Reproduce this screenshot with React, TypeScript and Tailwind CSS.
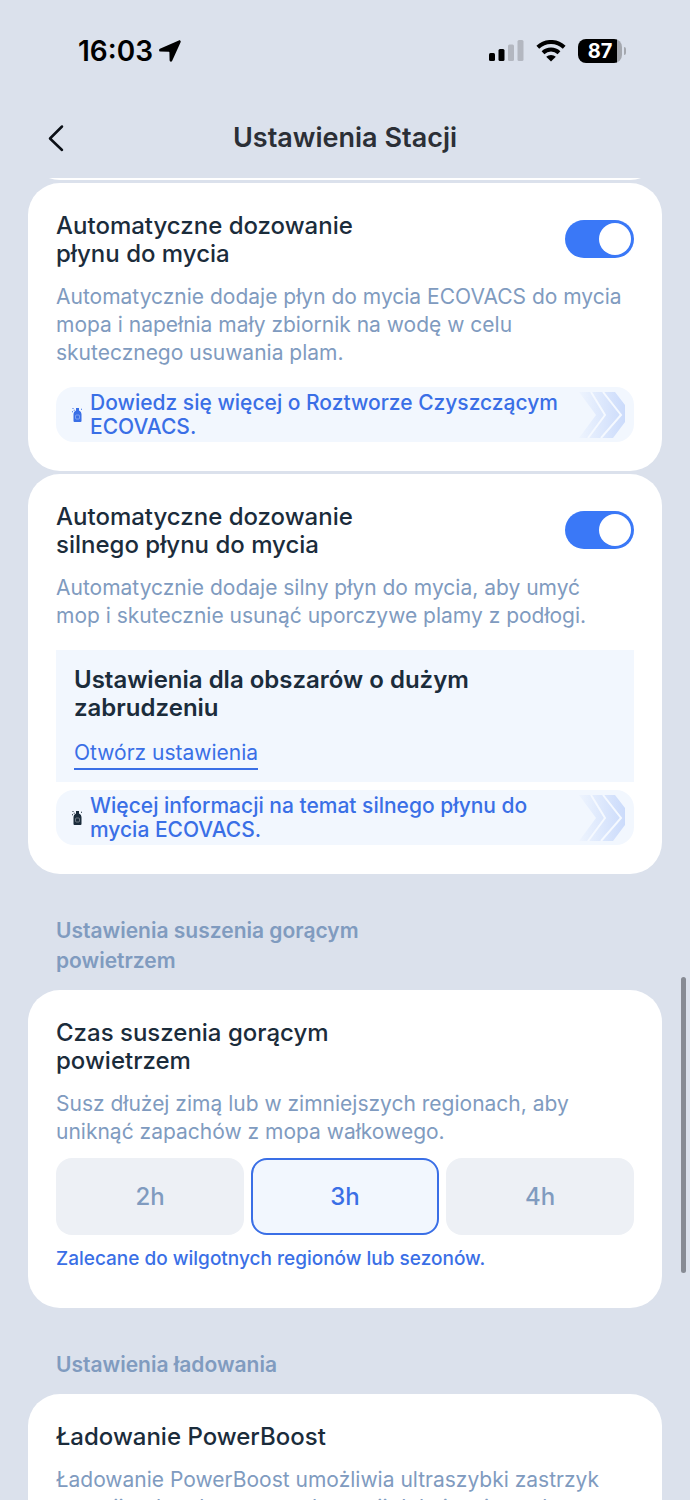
import { useState } from 'react';
import type { ReactNode } from 'react';

const dryingTimes = ['2h', '3h', '4h'];

function StatusBar() {
    return (
        <div className="flex h-[102px] shrink-0 items-center justify-between pl-[78px] pr-16 text-black">
            <div className="flex items-center gap-1.5">
                <span className="text-[28px] leading-8 font-semibold">16:03</span>
                <svg className="h-[22px] w-[22px]" viewBox="0 0 22 22" fill="currentColor" aria-hidden="true">
                    <path d="M19.800.4.9 8.800C-.4 9.400-.1 11.500 1.300 11.500L9.600 11.700c.6 0 .8.2.8.8l.2 7.800c0 1.600 2 1.900 2.600.5L21.600 2.200C22.100 1 21-.1 19.800.4z" />
                </svg>
            </div>
            <div className="flex items-center gap-3">
                <svg className="h-[22px] w-[35px]" viewBox="0 0 35 22" aria-hidden="true">
                    <rect x="0" y="13" width="6" height="8" rx="1.500" />
                    <rect x="9.500" y="9" width="6" height="12" rx="1.500" />
                    <rect x="19" y="4.500" width="6" height="16.500" rx="1.500" fill="#b3b7c0" />
                    <rect x="28.500" y="0" width="6" height="21" rx="1.500" fill="#b3b7c0" />
                </svg>
                <svg className="h-[22px] w-[30px]" viewBox="0 0 30 22" aria-hidden="true">
                    <path d="M15 21.500 10.200 16.800a7 7 0 0 1 9.600 0z" />
                    <path d="M7 12.700a11.600 11.600 0 0 1 16 0" fill="none" stroke="#000" strokeWidth="4" />
                    <path d="M1.800 7.200a19.200 19.200 0 0 1 26.400 0" fill="none" stroke="#000" strokeWidth="4" />
                </svg>
                <div className="flex items-center gap-0.5">
                    <div className="flex h-6 w-11 items-center justify-center rounded-lg bg-linear-to-r from-black from-88% to-[#a5a8af] to-88% text-xl leading-6 font-bold text-white">
                        87
                    </div>
                    <div className="h-2 w-0.5 rounded-r bg-[#a5a8af]" />
                </div>
            </div>
        </div>
    );
}

function Header() {
    return (
        <header className="grid h-19 shrink-0 grid-cols-[1fr_auto_1fr] items-start px-12">
            <button type="button" aria-label="Wstecz" className="flex h-[72px] w-8 items-center">
                <svg className="h-7 w-4" viewBox="0 0 16 28" fill="none" stroke="#0b0f16" strokeWidth="2.500" strokeLinecap="round" strokeLinejoin="round">
                    <path d="M14 2.500 2 14.500 14 26" />
                </svg>
            </button>
            <h1 className="text-[27px] leading-[72px] font-semibold text-[#2b2f36]">Ustawienia Stacji</h1>
        </header>
    );
}

function Card({ children }: { children: ReactNode }) {
    return <section className="mx-7 rounded-[32px] bg-white px-7 pt-[29px] pb-[29px]">{children}</section>;
}

function Title({ children }: { children: ReactNode }) {
    return <h2 className="max-w-[340px] text-2xl leading-7 font-medium text-[#1b2c3b]">{children}</h2>;
}

function Description({ children }: { children: ReactNode }) {
    return <p className="mt-[15px] pr-3 text-[21px] leading-7 text-[#809bbf]">{children}</p>;
}

function SectionLabel({ children }: { children: ReactNode }) {
    return (
        <h3 className="mx-14 mt-[42px] mb-3.5 max-w-[340px] text-[21px] leading-[30px] font-semibold text-[#809bbf]">
            {children}
        </h3>
    );
}

function SwitchRow({ id, label }: { id: string; label: string }) {
    return (
        <div className="flex items-start justify-between">
            <label htmlFor={id}>
                <Title>{label}</Title>
            </label>
            <span className="relative mt-2 h-[38px] w-[69px] shrink-0">
                <input
                    id={id}
                    type="checkbox"
                    role="switch"
                    defaultChecked
                    className="peer h-full w-full appearance-none rounded-full bg-[#c8d0dc] checked:bg-[#3a78f7]"
                />
                <span className="pointer-events-none absolute top-[3px] left-[3px] h-8 w-8 rounded-full bg-white peer-checked:right-[3px] peer-checked:left-auto" />
            </span>
        </div>
    );
}

function BottleIcon({ className }: { className: string }) {
    return (
        <svg className={className} viewBox="0 0 10 14" fill="currentColor" aria-hidden="true">
            <path d="M4 0h3v2.500c1.700.8 2.500 2 2.500 4V13a1 1 0 0 1-1 1h-6a1 1 0 0 1-1-1V6.500c0-2 .8-3.200 2.500-4z" />
            <rect x="3.500" y="7" width="4" height="4" rx="1" fill="none" stroke="#fff" strokeOpacity=".35" />
            <path d="M.5 0h1v1h-1zM1.700 1.700h1v1h-1zM0 3.200h1v1H0zM9 .8h1v1H9z" />
        </svg>
    );
}

function InfoLink({ id, iconClass, children }: { id: string; iconClass: string; children: ReactNode }) {
    return (
        <a href="#" className="flex h-[55px] items-center rounded-[18px] bg-[#f2f7fe] pr-2 pl-4 text-[#3a6fe6]">
            <BottleIcon className={iconClass} />
            <span className="ml-2 flex-1 text-[21px] leading-6 font-medium">{children}</span>
            <svg className="h-[46px] w-[50px] shrink-0" viewBox="0 0 50 46" aria-hidden="true">
                <defs>
                    <linearGradient id={id}>
                        <stop offset="0" stopColor="#cbdbfb" stopOpacity="0.1" />
                        <stop offset="1" stopColor="#cbdbfb" />
                    </linearGradient>
                </defs>
                <path d="M3 0h36l10 13v17L37 46H3l17-23z" fill={`url(#${id})`} />
                <path d="m15 0 14 23-17 23M27 0l18 23-20 23" fill="none" stroke="#f5f9ff" strokeWidth="2" />
            </svg>
        </a>
    );
}

export default function App() {
    const [dryingTime, setDryingTime] = useState('3h');

    return (
        <div className="relative flex h-screen flex-col overflow-hidden bg-[#dbe1ec] font-['Inter',sans-serif]">
            <StatusBar />
            <Header />

            <main className="min-h-0 flex-1 overflow-hidden">
                {/* tail of the card that is scrolled under the header */}
                <div className="mx-7 mb-[3px] flex h-0.5 items-end overflow-hidden">
                    <div className="h-16 w-full rounded-[32px] bg-white" />
                </div>

                <Card>
                    <SwitchRow id="detergent" label="Automatyczne dozowanie płynu do mycia" />
                    <Description>
                        Automatycznie dodaje płyn do mycia ECOVACS do mycia mopa i napełnia mały zbiornik na wodę w celu
                        skutecznego usuwania plam.
                    </Description>
                    <div className="mt-5">
                        <InfoLink id="detergent-arrows" iconClass="h-3.5 w-2.5 shrink-0">
                            Dowiedz się więcej o Roztworze Czyszczącym ECOVACS.
                        </InfoLink>
                    </div>
                </Card>

                <div className="h-[3px]" />

                <Card>
                    <SwitchRow id="strong-detergent" label="Automatyczne dozowanie silnego płynu do mycia" />
                    <Description>
                        Automatycznie dodaje silny płyn do mycia, aby umyć mop i skutecznie usunąć uporczywe plamy z
                        podłogi.
                    </Description>
                    <div className="mt-5 mb-2 bg-[#f2f7fe] px-[18px] pt-4 pb-3">
                        <h4 className="text-2xl leading-7 font-semibold text-[#1b2c3b]">
                            Ustawienia dla obszarów o dużym zabrudzeniu
                        </h4>
                        <a
                            href="#"
                            className="mt-4 inline-block border-b-2 border-[#3a6fe6] text-[21px] leading-[30px] text-[#3a6fe6]"
                        >
                            Otwórz ustawienia
                        </a>
                    </div>
                    <InfoLink id="strong-detergent-arrows" iconClass="h-3.5 w-2.5 shrink-0 text-[#1b2c3b]">
                        Więcej informacji na temat silnego płynu do mycia ECOVACS.
                    </InfoLink>
                </Card>

                <SectionLabel>Ustawienia suszenia gorącym powietrzem</SectionLabel>
                <Card>
                    <Title>Czas suszenia gorącym powietrzem</Title>
                    <Description>
                        Susz dłużej zimą lub w zimniejszych regionach, aby uniknąć zapachów z mopa wałkowego.
                    </Description>
                    <div className="mt-3 grid grid-cols-3 gap-[7px]">
                        {dryingTimes.map((time) => (
                            <button
                                key={time}
                                type="button"
                                aria-pressed={time === dryingTime}
                                onClick={() => setDryingTime(time)}
                                className={
                                    time === dryingTime
                                        ? 'h-[77px] rounded-2xl border-2 border-[#3a6fe6] bg-[#f2f7fe] text-2xl font-medium text-[#3a6fe6]'
                                        : 'h-[77px] rounded-2xl bg-[#edf0f5] text-2xl font-medium text-[#809bbf]'
                                }
                            >
                                {time}
                            </button>
                        ))}
                    </div>
                    <p className="mt-2.5 mb-1.5 text-[19px] leading-7 font-medium text-[#3a6fe6]">
                        Zalecane do wilgotnych regionów lub sezonów.
                    </p>
                </Card>

                <SectionLabel>Ustawienia ładowania</SectionLabel>
                <Card>
                    <Title>Ładowanie PowerBoost</Title>
                    <Description>
                        Ładowanie PowerBoost umożliwia ultraszybki zastrzyk energii, gdy robot wraca do stacji dokującej w celu
                        umycia mopa.
                    </Description>
                </Card>
            </main>

            <div className="absolute top-[977px] right-1 h-[296px] w-[5px] rounded-full bg-[#878b94]" />
        </div>
    );
}
